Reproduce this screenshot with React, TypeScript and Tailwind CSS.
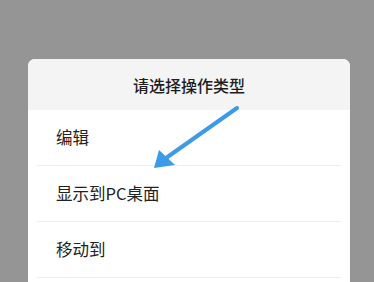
const items = ["编辑", "显示到PC桌面", "移动到"];

export default function App() {
  return (
    <div
      className="relative h-[282px] w-[374px] overflow-hidden bg-[#959595] pl-[28px] pt-[59px]"
      style={{ fontFamily: '"Noto Sans CJK SC", "Noto Sans", sans-serif' }}
    >
      <div className="w-[322px] overflow-hidden rounded-t-[7px] bg-white">
        <div className="flex h-[51px] items-center justify-center bg-[#f4f4f4] text-[16px] font-medium text-[#1e1e1e]">
          请选择操作类型
        </div>
        <div className="px-[9px]">
          {items.map((t) => (
            <div
              key={t}
              className="flex h-[56px] items-center border-b border-[#eeeeee] pl-[19px] text-[16.5px] text-[#222222]"
            >
              {t}
            </div>
          ))}
          <div className="h-[40px]" />
        </div>
      </div>

      {/* pointer arrow */}
      <svg
        className="absolute left-0 top-0"
        width="374"
        height="282"
        viewBox="0 0 374 282"
      >
        <line
          x1="237"
          y1="108"
          x2="166"
          y2="158"
          stroke="#3c9be8"
          strokeWidth="4"
          strokeLinecap="round"
        />
        <polygon points="154,168 159,150 175,165" fill="#3c9be8" />
      </svg>
    </div>
  );
}
